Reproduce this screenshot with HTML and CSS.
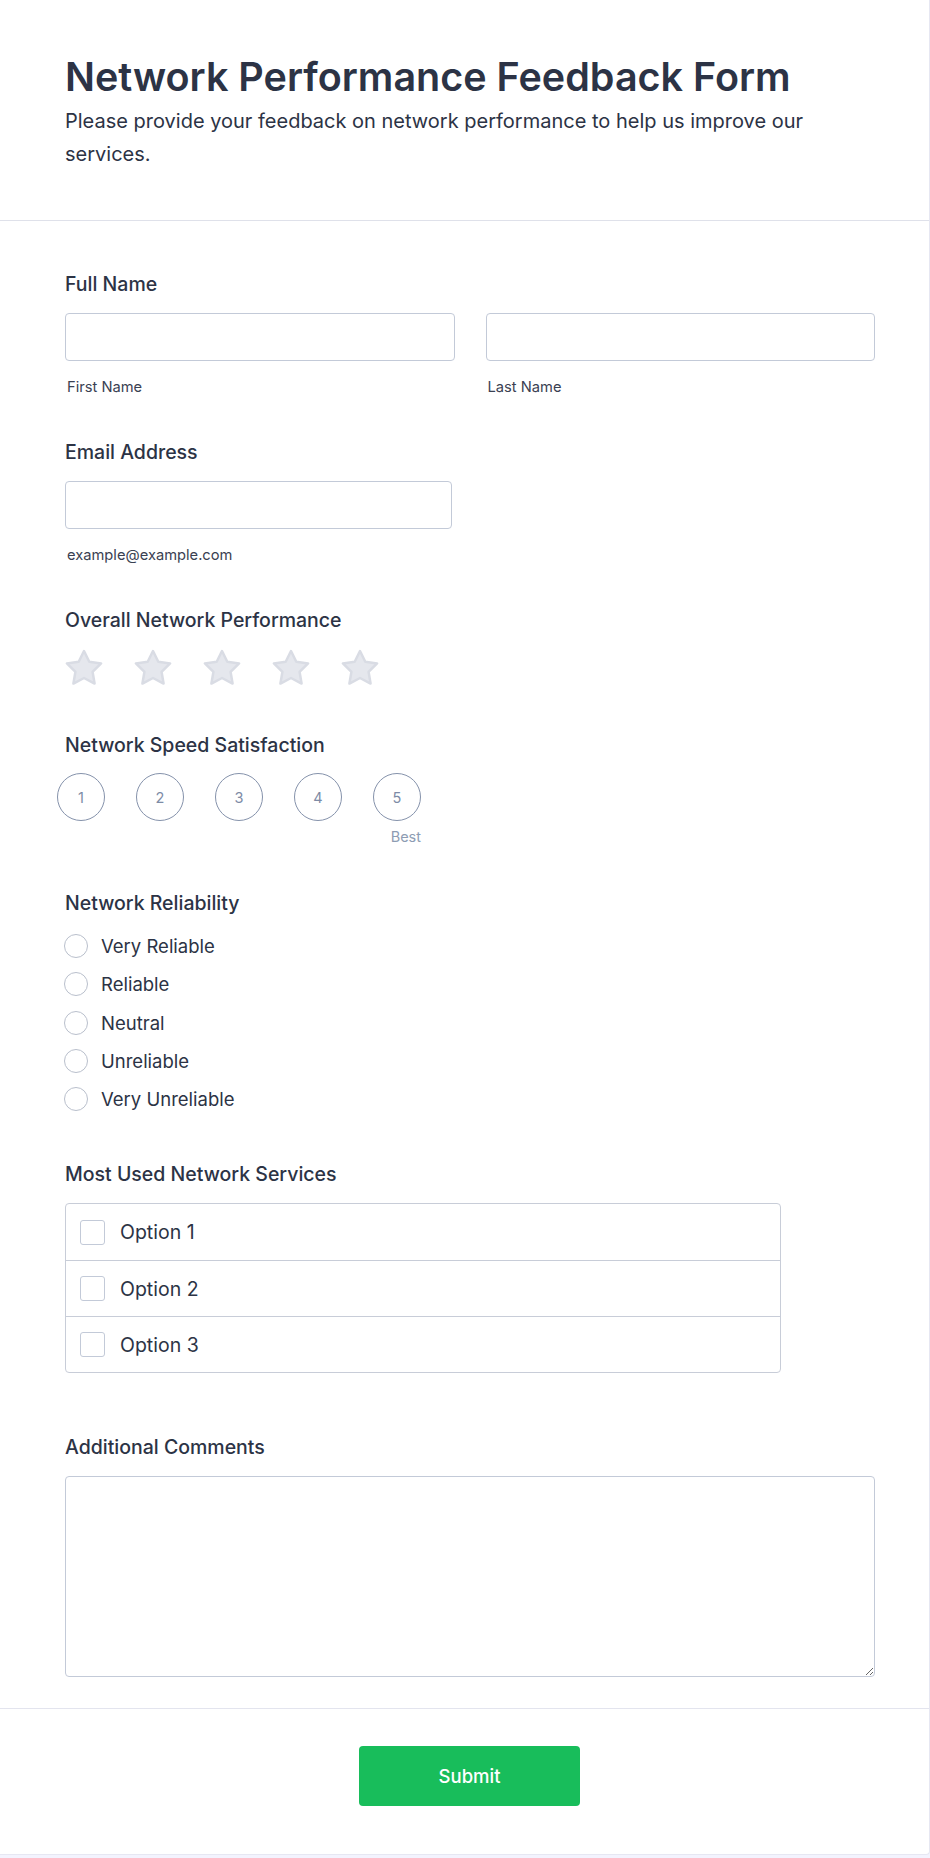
FILE: index.html
```html
<!DOCTYPE html>
<html lang="en">
<head>
<meta charset="utf-8">
<title>Network Performance Feedback Form</title>
<link rel="stylesheet" href="styles.css">
</head>
<body>
<div class="card">
  <header class="header">
    <h1 class="title">Network Performance Feedback Form</h1>
    <p class="subtitle">Please provide your feedback on network performance to help us improve our services.</p>
  </header>

  <form class="form-body">
    <div class="field field-first">
      <div class="label">Full Name</div>
      <div class="name-grid">
        <div class="name-col">
          <input class="text-input" type="text">
          <div class="sublabel">First Name</div>
        </div>
        <div class="name-col">
          <input class="text-input" type="text">
          <div class="sublabel">Last Name</div>
        </div>
      </div>
    </div>

    <div class="field">
      <div class="label">Email Address</div>
      <input class="text-input email-input" type="email">
      <div class="sublabel">example@example.com</div>
    </div>

    <div class="field">
      <div class="label">Overall Network Performance</div>
      <div class="stars">
        <svg class="star" viewBox="-19 -20 38 37" width="38" height="37"><path d="M0 -18 L5.29 -7.28 L17.12 -5.56 L8.56 2.78 L10.58 14.56 L0 9 L-10.58 14.56 L-8.56 2.78 L-17.12 -5.56 L-5.29 -7.28 Z"/></svg>
        <svg class="star" viewBox="-19 -20 38 37" width="38" height="37"><path d="M0 -18 L5.29 -7.28 L17.12 -5.56 L8.56 2.78 L10.58 14.56 L0 9 L-10.58 14.56 L-8.56 2.78 L-17.12 -5.56 L-5.29 -7.28 Z"/></svg>
        <svg class="star" viewBox="-19 -20 38 37" width="38" height="37"><path d="M0 -18 L5.29 -7.28 L17.12 -5.56 L8.56 2.78 L10.58 14.56 L0 9 L-10.58 14.56 L-8.56 2.78 L-17.12 -5.56 L-5.29 -7.28 Z"/></svg>
        <svg class="star" viewBox="-19 -20 38 37" width="38" height="37"><path d="M0 -18 L5.29 -7.28 L17.12 -5.56 L8.56 2.78 L10.58 14.56 L0 9 L-10.58 14.56 L-8.56 2.78 L-17.12 -5.56 L-5.29 -7.28 Z"/></svg>
        <svg class="star" viewBox="-19 -20 38 37" width="38" height="37"><path d="M0 -18 L5.29 -7.28 L17.12 -5.56 L8.56 2.78 L10.58 14.56 L0 9 L-10.58 14.56 L-8.56 2.78 L-17.12 -5.56 L-5.29 -7.28 Z"/></svg>
      </div>
    </div>

    <div class="field field-speed">
      <div class="label">Network Speed Satisfaction</div>
      <div class="scale">
        <div class="scale-row">
          <span class="scale-item">1</span>
          <span class="scale-item">2</span>
          <span class="scale-item">3</span>
          <span class="scale-item">4</span>
          <span class="scale-item">5</span>
        </div>
        <div class="scale-best">Best</div>
      </div>
    </div>

    <div class="field field-reliability">
      <div class="label">Network Reliability</div>
      <div class="radios">
        <div class="radio-row"><span class="radio"></span><span class="radio-text">Very Reliable</span></div>
        <div class="radio-row"><span class="radio"></span><span class="radio-text">Reliable</span></div>
        <div class="radio-row"><span class="radio"></span><span class="radio-text">Neutral</span></div>
        <div class="radio-row"><span class="radio"></span><span class="radio-text">Unreliable</span></div>
        <div class="radio-row"><span class="radio"></span><span class="radio-text">Very Unreliable</span></div>
      </div>
    </div>

    <div class="field field-services">
      <div class="label">Most Used Network Services</div>
      <div class="checklist">
        <div class="check-row"><span class="checkbox"></span><span class="check-text">Option 1</span></div>
        <div class="check-row"><span class="checkbox"></span><span class="check-text">Option 2</span></div>
        <div class="check-row"><span class="checkbox"></span><span class="check-text">Option 3</span></div>
      </div>
    </div>

    <div class="field field-comments">
      <div class="label">Additional Comments</div>
      <textarea class="textarea"></textarea>
    </div>
  </form>

  <footer class="footer">
    <button class="submit" type="button">Submit</button>
  </footer>
</div>
</body>
</html>
```

FILE: styles.css
```css
* {
  box-sizing: border-box;
}

html, body {
  margin: 0;
  padding: 0;
}

body {
  background: #f3f3fe;
  font-family: Inter, "Noto Sans", "Liberation Sans", sans-serif;
  color: #2c3345;
  min-height: 1858px;
}

.card {
  width: 930px;
  background: #ffffff;
  border-right: 1px solid #e6e7f2;
  border-bottom: 1px solid #e6e7f2;
  border-radius: 0 0 4px 0;
}

.header {
  padding: 54px 55px 49px 65px;
  border-bottom: 1px solid #dfe1ea;
}

.title {
  margin: 0;
  font-size: 39.5px;
  line-height: 46px;
  font-weight: 600;
  color: #2c3345;
}

.subtitle {
  margin: 5px 0 0 0;
  max-width: 810px;
  font-size: 20px;
  line-height: 33px;
  font-weight: 400;
  color: #2c3345;
}

.form-body {
  padding: 52px 55px 31px 65px;
  display: flex;
  flex-direction: column;
}

.field {
  margin-top: 45px;
}

.field-first {
  margin-top: 0;
}

.field-speed {
  margin-top: 48px;
}

.field-reliability {
  margin-top: 46px;
}

.field-services {
  margin-top: 52px;
}

.field-comments {
  margin-top: 63px;
}

.label {
  font-size: 19.5px;
  line-height: 22px;
  font-weight: 500;
  color: #2c3345;
  margin-bottom: 18px;
}

.name-grid {
  display: grid;
  grid-template-columns: 1fr 1fr;
  column-gap: 31px;
  width: 810px;
}

.text-input {
  display: block;
  width: 100%;
  height: 48px;
  border: 1px solid #c3cad8;
  border-radius: 4px;
  background: #fff;
  font-family: inherit;
  font-size: 16px;
  padding: 0 12px;
  margin: 0;
  outline: none;
}

.email-input {
  width: 387px;
}

.sublabel {
  margin-top: 17px;
  font-size: 14.7px;
  line-height: 18px;
  color: #3a4152;
  padding-left: 2px;
}

.stars {
  display: flex;
  gap: 31px;
  margin-top: 1px;
}

.star {
  display: block;
  fill: #e5e7ed;
  stroke: #d9dce4;
  stroke-width: 2.5;
  stroke-linejoin: round;
}

.scale {
  display: inline-flex;
  flex-direction: column;
  margin-left: -8px;
  margin-top: -1px;
}

.scale-row {
  display: flex;
  gap: 31px;
}

.scale-item {
  width: 48px;
  height: 48px;
  border: 1px solid #8592ab;
  border-radius: 50%;
  display: flex;
  align-items: center;
  justify-content: center;
  font-size: 14.5px;
  color: #7d8ba6;
}

.scale-best {
  margin-top: 7px;
  text-align: right;
  font-size: 14.5px;
  line-height: 18px;
  color: #8d9cb3;
}

.radios {
  display: flex;
  flex-direction: column;
  gap: 14.25px;
  padding-top: 2px;
}

.radio-row {
  display: flex;
  align-items: center;
  height: 24px;
}

.radio {
  width: 24px;
  height: 24px;
  border: 1px solid #b9bfcc;
  border-radius: 50%;
  margin-left: -1px;
  flex: none;
}

.radio-text {
  margin-left: 13px;
  font-size: 18.5px;
  color: #2c3345;
}

.checklist {
  width: 716px;
  border: 1px solid #c8cdd8;
  border-radius: 4px;
}

.check-row {
  display: flex;
  align-items: center;
  height: 56px;
  padding-left: 14px;
}

.check-row + .check-row {
  border-top: 1px solid #c8cdd8;
}

.checkbox {
  width: 25px;
  height: 25px;
  border: 1px solid #c3cad8;
  border-radius: 3px;
  flex: none;
}

.check-text {
  margin-left: 15px;
  font-size: 19.5px;
  color: #2c3345;
}

.textarea {
  display: block;
  width: 810px;
  height: 201px;
  margin: 1px 0 0 0;
  border: 1px solid #c3cad8;
  border-radius: 4px;
  font-family: inherit;
  font-size: 16px;
  padding: 10px 12px;
  outline: none;
  resize: vertical;
}

.footer {
  border-top: 1px solid #e3e4ee;
  padding: 37px 55px 48px 65px;
  display: flex;
  justify-content: center;
}

.submit {
  width: 221px;
  height: 60px;
  background: #18bd5b;
  color: #ffffff;
  border: none;
  border-radius: 4px;
  font-family: inherit;
  font-size: 18.5px;
  font-weight: 500;
  cursor: pointer;
}
```
